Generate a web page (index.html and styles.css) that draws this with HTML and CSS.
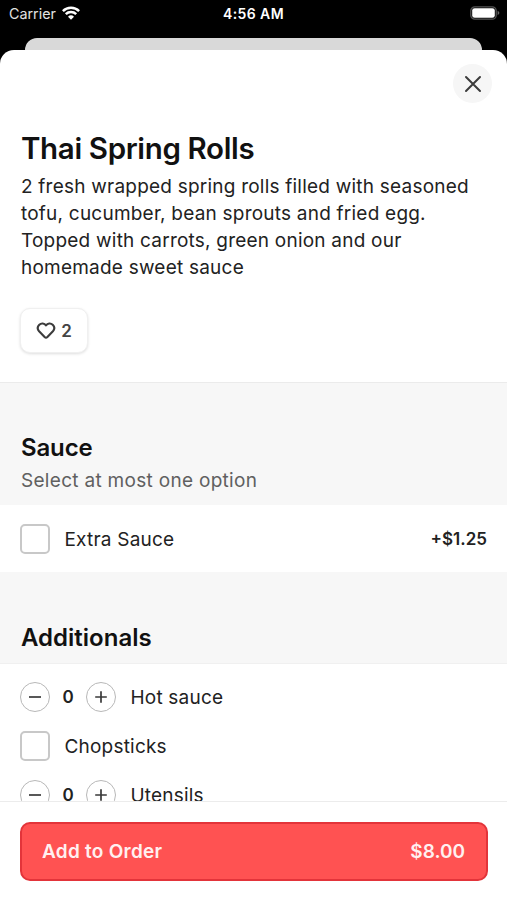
FILE: index.html
```html
<!DOCTYPE html>
<html lang="en">
<head>
<meta charset="utf-8">
<title>Thai Spring Rolls</title>
<link rel="stylesheet" href="styles.css">
</head>
<body>
<div class="screen">
  <header class="status">
    <div class="carrier"><span>Carrier</span>
      <svg class="wifi" width="18" height="14" viewBox="0 0 18 14" fill="none" stroke="#fff" stroke-width="2.5"><path d="M.9 5.1a11.5 11.5 0 0 1 16.2 0M3.8 8.2a7.4 7.4 0 0 1 10.4 0"/><path d="M9 13.7 6 10.7a4.3 4.3 0 0 1 6 0z" fill="#fff" stroke="none"/></svg>
    </div>
    <time class="clock">4:56 AM</time>
    <svg class="battery" width="30" height="14" viewBox="0 0 30 14"><rect x=".8" y=".8" width="25.4" height="12.4" rx="4" fill="none" stroke="#555" stroke-width="1.3"/><rect x="2.2" y="2.2" width="22.6" height="9.6" rx="2.4" fill="#fff"/><path d="M27.6 4.8q3.6 2.2 0 4.4z" fill="#666"/></svg>
  </header>
  <div class="backdrop"></div>
  <main class="sheet">
    <div class="content">
      <section class="intro">
        <button class="close" aria-label="Close"><svg width="18" height="18" viewBox="0 0 18 18" fill="none" stroke="#3c3c3c" stroke-width="2" stroke-linecap="round"><path d="M2 2l14 14M16 2L2 16"/></svg></button>
        <h1>Thai Spring Rolls</h1>
        <p class="description">2 fresh wrapped spring rolls filled with seasoned<br>tofu, cucumber, bean sprouts and fried egg.<br>Topped with carrots, green onion and our<br>homemade sweet sauce</p>
        <button class="like"><svg width="20" height="18" viewBox="0 0 20 18" fill="none" stroke="#3c3c3c" stroke-width="2.1" stroke-linejoin="round"><path d="M10 3.3C8.4 1.1 5.2.8 3.3 2.7 1.4 4.6 1.4 7.3 3.1 9.2L8.6 14.9Q10 16.2 11.4 14.9L16.9 9.2C18.6 7.3 18.6 4.6 16.7 2.7 14.8.8 11.6 1.1 10 3.3Z"/></svg><span>2</span></button>
      </section>
      <section class="group-head sauce-head"><h2>Sauce</h2><p>Select at most one option</p></section>
      <div class="sauce-options">
        <label class="option"><span class="check"></span><span class="name">Extra Sauce</span><span class="price">+$1.25</span></label>
      </div>
      <section class="group-head extras-head"><h2>Additionals</h2></section>
      <div class="extras">
        <div class="option"><button class="step" aria-label="Less"><svg width="14" height="14" viewBox="0 0 14 14"><path d="M1 7h12"/></svg></button><span class="count">0</span><button class="step" aria-label="More"><svg width="14" height="14" viewBox="0 0 14 14"><path d="M1.2 7h11.6M7 1.2v11.6"/></svg></button><span class="name">Hot sauce</span></div>
        <label class="option"><span class="check"></span><span class="name">Chopsticks</span></label>
        <div class="option"><button class="step" aria-label="Less"><svg width="14" height="14" viewBox="0 0 14 14"><path d="M1 7h12"/></svg></button><span class="count">0</span><button class="step" aria-label="More"><svg width="14" height="14" viewBox="0 0 14 14"><path d="M1.2 7h11.6M7 1.2v11.6"/></svg></button><span class="name">Utensils</span></div>
      </div>
    </div>
    <footer class="footer"><button class="order"><span class="order-label">Add to Order</span><span>$8.00</span></button></footer>
  </main>
</div>
</body>
</html>
```
FILE: styles.css
```css
* { box-sizing: border-box; }
body { margin: 0; background: #000; font-family: Inter, sans-serif; color: #222; }
h1, h2, p { margin: 0; }
button { font: inherit; color: inherit; padding: 0; margin: 0; border: 0; }
svg { display: block; flex: none; }
.screen { height: 900px; display: flex; flex-direction: column; overflow: hidden; }
.status { height: 38px; flex: none; padding: 0 7px 11px 9px; display: grid; grid-template-columns: 1fr auto 1fr; align-items: center; color: #fff; font-size: 14.3px; }
.carrier { display: flex; align-items: center; gap: 6px; color: #e2e2e2; }
.wifi { margin-top: -2px; }
.clock { font-weight: 600; font-size: 14px; letter-spacing: .4px; margin-left: -2px; }
.battery { justify-self: end; margin-top: -1px; }
.backdrop { height: 12px; flex: none; margin: 0 25px; background: #d9d9d9; border-radius: 12px 12px 0 0; }
.sheet { flex: 1; min-height: 0; background: #fff; border-radius: 14px 14px 0 0; display: flex; flex-direction: column; overflow: hidden; }
.content { flex: 1; min-height: 0; overflow: hidden; }
.intro { height: 333px; padding: 14px 20px 0; border-bottom: 1px solid #ebebeb; display: flex; flex-direction: column; align-items: flex-start; }
.close { width: 39px; height: 39px; border-radius: 50%; background: #f6f6f6; align-self: flex-end; margin-right: -5px; display: flex; align-items: center; justify-content: center; }
h1 { margin: 26px 0 0 1px; height: 40px; font-size: 29.5px; line-height: 38px; font-weight: 600; letter-spacing: -.36px; color: #111; white-space: nowrap; }
.description { margin: 4px 0 0; padding-left: 1px; font-size: 19px; line-height: 27px; letter-spacing: .22px; white-space: nowrap; }
.like { width: 68px; height: 45px; margin-top: 27px; border: 1px solid #f0f0f0; border-radius: 10px; background: #fff; box-shadow: 0 1px 3px #0002; display: flex; align-items: center; justify-content: center; gap: 5px; font-size: 17px; font-weight: 600; color: #444; }
.group-head { background: #f7f7f7; padding-left: 21px; }
.sauce-head { height: 122px; padding-top: 49px; }
.extras-head { height: 92px; padding-top: 50px; border-bottom: 1px solid #f0f0f0; }
h2 { font-size: 24px; line-height: 32px; font-weight: 600; color: #111; }
.sauce-head h2 { letter-spacing: -.15px; }
.group-head p { font-size: 19px; line-height: 27px; margin-top: 3px; letter-spacing: .3px; color: #606060; }
.sauce-options { height: 67px; display: flex; align-items: center; padding: 0 20px; }
.sauce-options .option { flex: 1; }
.extras { padding: 18px 20px 0; display: flex; flex-direction: column; gap: 19px; }
.option { height: 30px; display: flex; align-items: center; font-size: 19px; letter-spacing: .2px; }
.name { margin-left: 14.5px; line-height: 27px; }
.sauce-options .name, .extras .name { padding-top: 1px; }
.price { margin-left: auto; font-size: 17px; font-weight: 600; letter-spacing: 0; }
.check { width: 30px; height: 30px; flex: none; border: 2px solid #c8c8c8; border-radius: 5px; }
.step { width: 30px; height: 30px; flex: none; border: 1.5px solid #b8b8b8; border-radius: 50%; background: #fff; display: flex; align-items: center; justify-content: center; }
.step svg { fill: none; stroke: #3a3a3a; stroke-width: 1.7; }
.count { width: 36px; text-align: center; font-size: 17px; font-weight: 600; letter-spacing: 0; }
.footer { height: 99px; flex: none; padding: 20px 19px 0 20px; border-top: 1px solid #ececec; background: #fff; }
.order { width: 100%; height: 59px; padding: 0 21px 0 20px; border: 2px solid #e3343a; border-radius: 10px; background: #ff5252; color: #fff0f0; display: flex; align-items: center; justify-content: space-between; font-size: 19px; font-weight: 600; }
.order-label { letter-spacing: .25px; }
```
